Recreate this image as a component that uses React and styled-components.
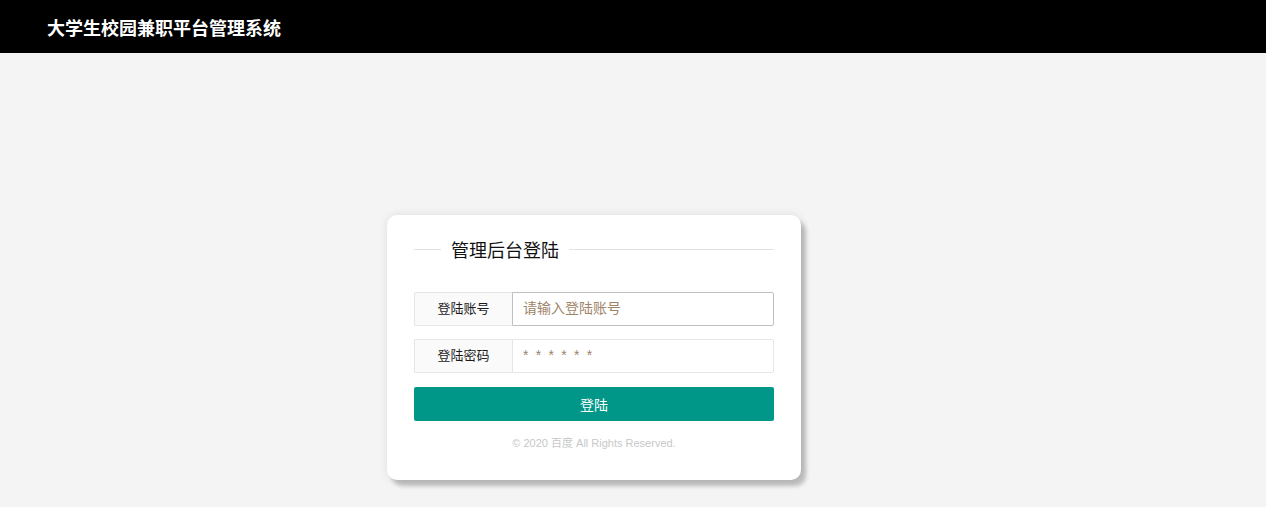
import React from 'react';
import styled, { createGlobalStyle } from 'styled-components';

const GlobalStyle = createGlobalStyle`
  html, body {
    margin: 0;
    padding: 0;
    background: #f4f4f4;
    font-family: "Liberation Sans", "Noto Sans CJK SC", sans-serif;
  }
  * {
    box-sizing: border-box;
  }
`

const Page = styled.div`
  min-height: 507px;
  background: #f4f4f4;
`

const Header = styled.header`
  height: 53px;
  background: #000;
  display: flex;
  align-items: center;
  padding-left: 47px;
`

const Logo = styled.h1`
  margin: 0;
  font-size: 18px;
  font-weight: bold;
  color: #fff;
`

const Main = styled.main`
  padding: 162px 0 0 387px;
`

const Card = styled.form`
  width: 414px;
  height: 265px;
  background: #fff;
  border-radius: 10px;
  padding: 24px 27px 0;
  box-shadow: 0 0 10px rgba(0, 0, 0, 0.09), 5px 6px 4px rgba(0, 0, 0, 0.22);
`

const TitleRow = styled.div`
  display: flex;
  align-items: flex-start;
  height: 24px;
`

const Line = styled.span`
  height: 1px;
  margin-top: 10px;
  background: #e2e2e2;
  flex: ${props => props.$grow ? '1' : '0 0 27px'};
`

const Title = styled.span`
  padding: 0 10px;
  font-size: 18px;
  line-height: 24px;
  color: #111;
`

const Fields = styled.div`
  margin-top: 29px;
  display: flex;
  flex-direction: column;
  gap: 13px;
`

const FormRow = styled.label`
  display: flex;
  height: 34px;
`

const Label = styled.span`
  width: 98px;
  flex: 0 0 98px;
  display: flex;
  align-items: center;
  justify-content: center;
  padding-bottom: 3px;
  background: #fafafa;
  border: 1px solid #e6e6e6;
  border-right: none;
  border-radius: 2px 0 0 2px;
  font-size: 13px;
  color: #1a1a1a;
`

const Input = styled.input`
  flex: 1;
  min-width: 0;
  height: 34px;
  margin: 0;
  padding: 0 10px 3px;
  border: 1px solid ${props => props.$active ? '#c0c0c0' : '#e6e6e6'};
  border-radius: 0 2px 2px 0;
  font-family: inherit;
  font-size: 14px;
  color: #333;
  outline: none;
  background: #fff;
  letter-spacing: ${props => props.$spaced ? '7.3px' : '0'};
  &::placeholder {
    color: #a0846a;
  }
`

const Button = styled.button`
  margin-top: 14px;
  width: 100%;
  height: 34px;
  border: none;
  border-radius: 2px;
  background: #009688;
  color: #fff;
  font-family: inherit;
  font-size: 14px;
  cursor: pointer;
`

const Footer = styled.p`
  margin: 13px 0 0;
  text-align: center;
  font-size: 11px;
  line-height: 18px;
  color: #c8c8c8;
`

export default function App() {
  return (
    <Page>
      <GlobalStyle />
      <Header>
        <Logo>大学生校园兼职平台管理系统</Logo>
      </Header>
      <Main>
        <Card onSubmit={e => e.preventDefault()}>
          <TitleRow>
            <Line />
            <Title>管理后台登陆</Title>
            <Line $grow />
          </TitleRow>
          <Fields>
            <FormRow>
              <Label>登陆账号</Label>
              <Input $active type="text" placeholder="请输入登陆账号" />
            </FormRow>
            <FormRow>
              <Label>登陆密码</Label>
              <Input $spaced type="password" placeholder="******" />
            </FormRow>
          </Fields>
          <Button type="submit">登陆</Button>
          <Footer>© 2020 百度 All Rights Reserved.</Footer>
        </Card>
      </Main>
    </Page>
  );
}
